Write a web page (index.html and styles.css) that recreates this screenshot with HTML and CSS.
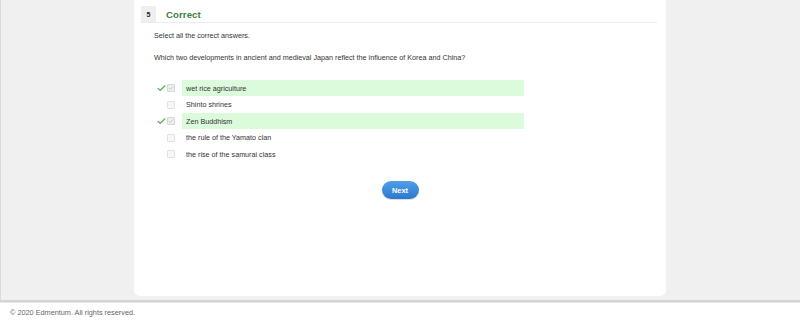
FILE: index.html
```html
<!DOCTYPE html>
<html lang="en">
<head>
<meta charset="utf-8">
<title>Correct</title>
<link rel="stylesheet" href="styles.css">
</head>
<body>
<main class="main">
  <section class="card">
    <header class="card-head">
      <span class="qnum">5</span>
      <span class="status">Correct</span>
    </header>
    <p class="instr">Select all the correct answers.</p>
    <p class="question">Which two developments in ancient and medieval Japan reflect the influence of Korea and China?</p>
    <ul class="options">
      <li class="opt correct">
        <span class="mark"><svg width="9" height="6" viewBox="0 0 9 6"><path d="M0.8 3.2 L3.2 5.3 L8.3 0.6" fill="none" stroke="#5cb85c" stroke-width="1.4"/></svg></span>
        <span class="box checked"><svg width="6" height="6" viewBox="0 0 6 6"><path d="M1 3 L2.5 4.4 L5 1.5" fill="none" stroke="#c8c8c8" stroke-width="1"/></svg></span>
        <span class="label">wet rice agriculture</span>
      </li>
      <li class="opt">
        <span class="mark"></span>
        <span class="box"></span>
        <span class="label">Shinto shrines</span>
      </li>
      <li class="opt correct">
        <span class="mark"><svg width="9" height="6" viewBox="0 0 9 6"><path d="M0.8 3.2 L3.2 5.3 L8.3 0.6" fill="none" stroke="#5cb85c" stroke-width="1.4"/></svg></span>
        <span class="box checked"><svg width="6" height="6" viewBox="0 0 6 6"><path d="M1 3 L2.5 4.4 L5 1.5" fill="none" stroke="#c8c8c8" stroke-width="1"/></svg></span>
        <span class="label">Zen Buddhism</span>
      </li>
      <li class="opt">
        <span class="mark"></span>
        <span class="box"></span>
        <span class="label">the rule of the Yamato clan</span>
      </li>
      <li class="opt">
        <span class="mark"></span>
        <span class="box"></span>
        <span class="label">the rise of the samurai class</span>
      </li>
    </ul>
    <div class="actions">
      <button class="next" type="button">Next</button>
    </div>
  </section>
</main>
<footer class="footer">© 2020 Edmentum. All rights reserved.</footer>
</body>
</html>
```
FILE: styles.css
```css
* { box-sizing: border-box; }
html, body { margin: 0; padding: 0; }
body {
  font-family: "Liberation Sans", Arial, sans-serif;
  background: #ffffff;
  color: #333333;
  width: 800px;
  height: 322px;
  overflow: hidden;
}
.main {
  height: 300px;
  background: #f0f0f0;
  border-left: 1px solid #dadada;
  display: flex;
  justify-content: center;
}
.card {
  width: 532px;
  height: 296px;
  background: #ffffff;
  border-radius: 0 0 6px 6px;
  padding-top: 6px;
  margin-left: -1px;
}
.card-head {
  display: flex;
  align-items: center;
  height: 17px;
  margin: 0 9px 0 7px;
  border-bottom: 1px solid #ececec;
}
.qnum {
  width: 15px;
  height: 16px;
  background: #efefef;
  display: flex;
  align-items: center;
  justify-content: center;
  font-size: 7px;
  font-weight: bold;
  color: #222222;
}
.status {
  margin-left: 10px;
  font-size: 9.6px;
  font-weight: bold;
  color: #3e7f3e;
  letter-spacing: 0.1px;
}
.instr, .question {
  margin: 0;
  padding-left: 20px;
  font-size: 7.2px;
  line-height: 10px;
  color: #333333;
}
.instr { margin-top: 8px; }
.question { margin-top: 12px; }
.options {
  list-style: none;
  margin: 16.75px 0 0 0;
  padding: 0 0 0 23px;
}
.opt {
  display: flex;
  align-items: center;
  height: 16.5px;
}
.mark {
  width: 9px;
  height: 6px;
  display: flex;
}
.box {
  width: 8px;
  height: 8px;
  margin-left: 1px;
  border: 1px solid #e2e2e2;
  border-radius: 1px;
  background: #f7f7f7;
  display: flex;
  align-items: center;
  justify-content: center;
}
.box.checked {
  background: #efefef;
  border-color: #d6d6d6;
}
.label {
  margin-left: 7px;
  width: 342px;
  height: 16px;
  padding-left: 4px;
  display: flex;
  align-items: center;
  font-size: 7.2px;
  color: #333333;
}
.correct .label { background: #dcfadc; }
.actions {
  display: flex;
  justify-content: center;
  margin-top: 18.75px;
}
.next {
  width: 37px;
  height: 18px;
  border: 0;
  border-radius: 9px;
  background: linear-gradient(#519fe8, #2b78cc);
  color: #ffffff;
  font-family: "Liberation Sans", Arial, sans-serif;
  font-size: 7.4px;
  font-weight: bold;
  padding: 0;
  box-shadow: 0 1px 1px rgba(0,0,0,0.15);
}
.footer {
  height: 22px;
  border-top: 2px solid #d4d4d4;
  box-shadow: inset 0 1px 0 #e8e8e8;
  padding-left: 10px;
  display: flex;
  align-items: center;
  font-size: 7.3px;
  color: #666666;
}
```
